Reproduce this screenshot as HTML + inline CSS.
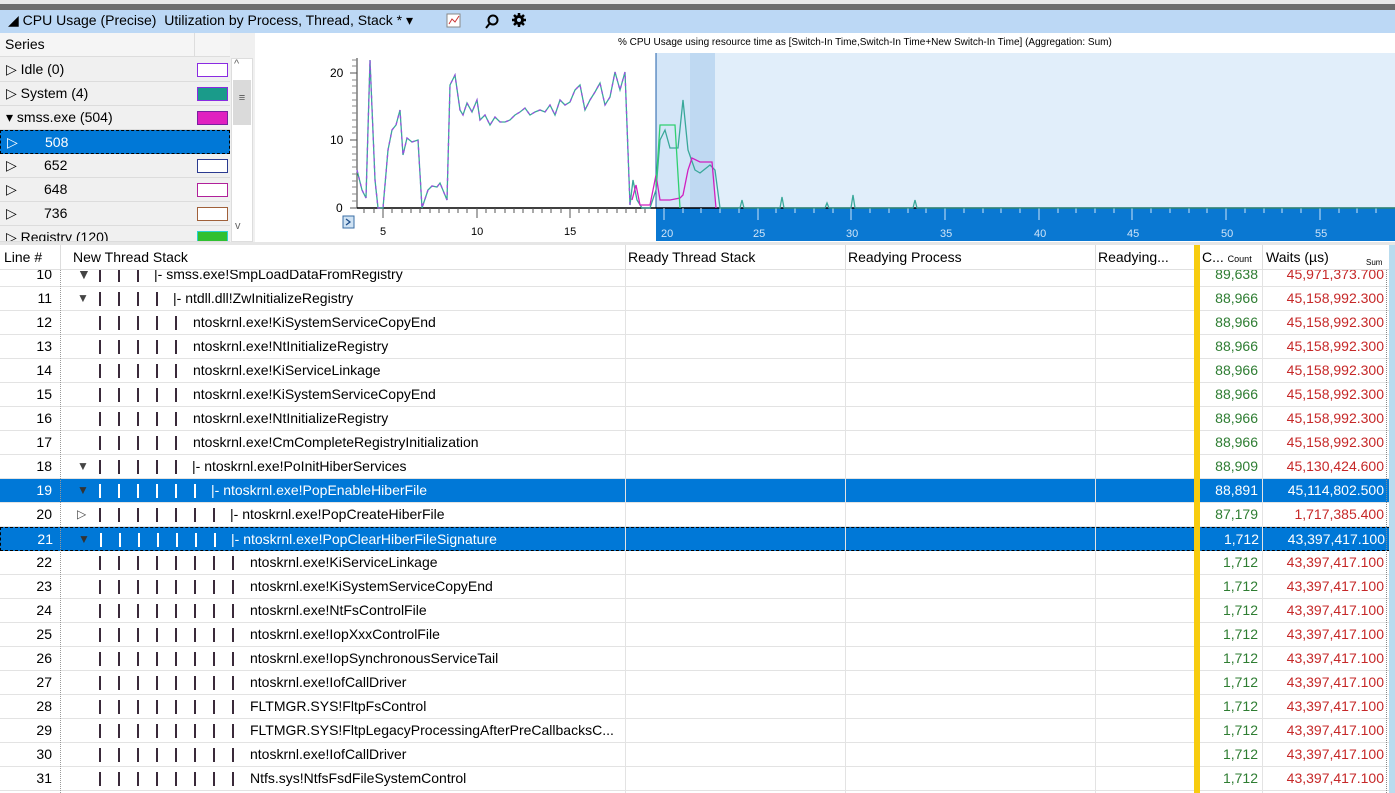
<!DOCTYPE html>
<html><head><meta charset="utf-8"><style>
*{margin:0;padding:0;box-sizing:border-box}
body{width:1395px;height:793px;overflow:hidden;background:#fff;font-family:"Liberation Sans",sans-serif;font-size:14px;color:#000;position:relative}
.a{position:absolute;white-space:nowrap}
.row{position:absolute;left:0;width:1395px;height:24px;border-bottom:1px solid #e3e3e3}
.sel{background:#0078d7;color:#fff}
.num{position:absolute;width:60px;text-align:right;padding-right:8px;left:0;top:3px}
.g{color:#2e7d32}.r{color:#c62828}
.sel .g,.sel .r{color:#fff}
.pp{position:absolute;top:3px}
.pi{position:absolute;top:5px;width:2px;height:14px;background:#3a2a3a}
.sel .pi{background:#fff}
.sr{position:absolute;left:0;width:230px;height:24px;border-bottom:1px solid #dcdcdc;background:#f0f0f0}
.sw{position:absolute;left:197px;top:5px;width:31px;height:14px;border:1.5px solid}
</style></head><body>
<div class="a" style="left:0;top:0;width:1395px;height:4px;background:#e8e8e8"></div>
<div class="a" style="left:0;top:4px;width:1395px;height:6px;background:#6d6d6d"></div>
<div class="a" style="left:0;top:10px;width:1395px;height:23px;background:#bcd8f5"></div>
<div class="a" style="left:8px;top:12px">◢ CPU Usage (Precise)&nbsp; Utilization by Process, Thread, Stack * ▾</div>
<svg class="a" style="left:446px;top:12px" width="90" height="20"><rect x="1" y="2" width="13" height="13" fill="#fff" stroke="#888"/><path d="M3 12l3-5 3 3 4-6" stroke="#c33" fill="none"/><circle cx="47" cy="8" r="4.5" stroke="#000" stroke-width="2" fill="none"/><path d="M44 11l-4 5" stroke="#000" stroke-width="2"/><path d="M73 1v14M66 8h14M68 3l10 10M78 3l-10 10" stroke="#000" stroke-width="2.5"/><circle cx="73" cy="8" r="5" fill="#000"/><circle cx="73" cy="8" r="2" fill="#bcd8f5"/></svg>

<div class="a" style="left:0;top:33px;width:255px;height:209px;background:#f0f0f0"></div>
<div class="a" style="left:0;top:33px;width:194px;height:24px;background:#f5f5f5;border-bottom:1px solid #ddd;padding:3px 5px">Series</div>
<div class="a" style="left:194px;top:33px;width:36px;height:24px;background:#f5f5f5;border-left:1px solid #ddd;border-bottom:1px solid #ddd"></div>
<div class="sr" style="top:58px"><span class="a" style="left:6px;top:3px">▷ Idle (0)</span><div class="sw" style="border-color:#8a2be2;background:#fff"></div></div>
<div class="sr" style="top:82px"><span class="a" style="left:6px;top:3px">▷ System (4)</span><div class="sw" style="border-color:#8a2be2;background:#1a9b8a"></div></div>
<div class="sr" style="top:106px"><span class="a" style="left:6px;top:3px">▾ smss.exe (504)</span><div class="sw" style="border-color:#7a1ea0;background:#e020c0"></div></div>
<div class="sr" style="top:130px;background:#0078d7;color:#fff;border:1px dashed #000"><span class="a" style="left:6px;top:3px">▷</span><span class="a" style="left:44px;top:3px">508</span></div>
<div class="sr" style="top:154px"><span class="a" style="left:6px;top:3px">▷</span><span class="a" style="left:44px;top:3px">652</span><div class="sw" style="border-color:#2a3a90;background:#fff"></div></div>
<div class="sr" style="top:178px"><span class="a" style="left:6px;top:3px">▷</span><span class="a" style="left:44px;top:3px">648</span><div class="sw" style="border-color:#b0209a;background:#fff"></div></div>
<div class="sr" style="top:202px"><span class="a" style="left:6px;top:3px">▷</span><span class="a" style="left:44px;top:3px">736</span><div class="sw" style="border-color:#a0603a;background:#fff"></div></div>
<div class="sr" style="top:226px;height:16px;overflow:hidden"><span class="a" style="left:6px;top:3px">▷ Registry (120)</span><div class="sw" style="border-color:#2ad0d0;background:#30c030"></div></div>
<div class="a" style="left:231px;top:58px;width:22px;height:184px;background:#fff;border:1px solid #ddd"></div>
<div class="a" style="left:234px;top:58px;font-size:11px;color:#666">^</div>
<div class="a" style="left:233px;top:80px;width:18px;height:45px;background:#dadada;color:#555;text-align:center;padding-top:12px;font-size:11px">≡</div>
<div class="a" style="left:235px;top:220px;font-size:11px;color:#666">v</div>

<div class="a" style="left:255px;top:33px;width:1140px;height:209px;background:#fff"></div>
<div class="a" style="left:618px;top:37px;font-size:10px">% CPU Usage using resource time as [Switch-In Time,Switch-In Time+New Switch-In Time] (Aggregation: Sum)</div>
<svg class="a" style="left:0;top:0" width="1395" height="245">
<rect x="656" y="53" width="739" height="155" fill="#e1eefa"/>
<rect x="656" y="53" width="34" height="155" fill="#d4e6f8"/>
<rect x="690" y="53" width="25" height="155" fill="#bfd9f2"/>
<line x1="656" y1="53" x2="656" y2="208" stroke="#1f5fa8"/>
<rect x="656" y="208" width="739" height="33" fill="#0a78d2"/>
<line x1="357" y1="58" x2="357" y2="208" stroke="#333"/>
<g stroke="#555"><line x1="350" y1="73" x2="357" y2="73"/><line x1="350" y1="140" x2="357" y2="140"/><line x1="350" y1="208" x2="357" y2="208"/></g>
<g stroke="#888">
<line x1="352" y1="80" x2="357" y2="80"/><line x1="352" y1="86" x2="357" y2="86"/><line x1="352" y1="93" x2="357" y2="93"/><line x1="352" y1="100" x2="357" y2="100"/><line x1="352" y1="106" x2="357" y2="106"/><line x1="352" y1="113" x2="357" y2="113"/><line x1="352" y1="120" x2="357" y2="120"/><line x1="352" y1="127" x2="357" y2="127"/><line x1="352" y1="133" x2="357" y2="133"/><line x1="352" y1="147" x2="357" y2="147"/><line x1="352" y1="154" x2="357" y2="154"/><line x1="352" y1="160" x2="357" y2="160"/><line x1="352" y1="167" x2="357" y2="167"/><line x1="352" y1="174" x2="357" y2="174"/><line x1="352" y1="181" x2="357" y2="181"/><line x1="352" y1="187" x2="357" y2="187"/><line x1="352" y1="194" x2="357" y2="194"/><line x1="352" y1="201" x2="357" y2="201"/><line x1="352" y1="66" x2="357" y2="66"/><line x1="352" y1="60" x2="357" y2="60"/>
</g>
<text x="330" y="77" font-size="12" font-family="Liberation Sans">20</text>
<text x="330" y="144" font-size="12" font-family="Liberation Sans">10</text>
<text x="336" y="212" font-size="12" font-family="Liberation Sans">0</text>
<line x1="357" y1="208" x2="1395" y2="208" stroke="#000" stroke-width="1.5"/>
<g stroke="#555" stroke-width="1">
<path d="M364 208v5M374 208v5M383 208v10M392 208v5M402 208v5M411 208v5M420 208v5M430 208v5M439 208v5M449 208v5M458 208v5M467 208v5M477 208v10M486 208v5M495 208v5M505 208v5M514 208v5M523 208v5M533 208v5M542 208v5M551 208v5M561 208v5M570 208v10M579 208v5M589 208v5M598 208v5M607 208v5M617 208v5M626 208v5M636 208v5M645 208v5"/>
</g>
<g stroke="#cfe4f8" stroke-width="1">
<path d="M664 208v12M683 208v5M701 208v5M720 208v5M739 208v5M758 208v12M776 208v5M795 208v5M814 208v5M833 208v5M851 208v12M870 208v5M889 208v5M908 208v5M926 208v5M945 208v12M964 208v5M983 208v5M1001 208v5M1020 208v5M1039 208v12M1058 208v5M1076 208v5M1095 208v5M1114 208v5M1132 208v12M1151 208v5M1170 208v5M1189 208v5M1207 208v5M1226 208v12M1245 208v5M1264 208v5M1282 208v5M1301 208v5M1320 208v12M1339 208v5M1357 208v5M1376 208v5"/>
</g>
<g font-size="11" font-family="Liberation Sans" fill="#000"><text x="380" y="235">5</text><text x="471" y="235">10</text><text x="564" y="235">15</text></g>
<g font-size="11" font-family="Liberation Sans" fill="#cfe4f8"><text x="661" y="237">20</text><text x="753" y="237">25</text><text x="846" y="237">30</text><text x="940" y="237">35</text><text x="1034" y="237">40</text><text x="1127" y="237">45</text><text x="1221" y="237">50</text><text x="1315" y="237">55</text></g>
<rect x="343" y="216" width="11" height="12" fill="#cfe2f3" stroke="#3a6ea5"/><path d="M346 219l4 3-4 3" stroke="#1f4f8a" fill="none" stroke-width="1.3"/>
<g fill="none" stroke-width="1.3">
<polyline stroke="#3aa89a" points="357,170 362,190 366,198 370,60 375,180 378,208 383,208 388,150 392,130 396,125 400,110 403,155 407,138 412,142 418,140 422,208 428,190 432,186 437,187 440,183 447,200 450,85 455,75 460,110 463,115 467,103 472,112 477,100 480,120 485,115 490,125 495,117 500,122 505,122 510,120 515,115 520,112 525,108 530,115 535,112 540,110 545,112 550,105 555,115 560,100 565,105 570,102 575,90 580,85 585,110 590,100 595,92 600,83 605,105 610,97 615,72 620,90 625,72 630,205 633,180 637,200 642,208 650,208 656,190 660,140 665,130 670,148 678,148 683,100 688,150 695,170 700,173 710,165 715,170 720,208 740,208 742,200 744,208 780,208 782,197 784,208 825,208 827,203 829,208 851,208 853,195 855,208 913,208 915,200 917,208 1395,208"/>
<polyline stroke="#9a50e0" stroke-dasharray="3,4" points="357,170 362,190 366,198 370,60 375,180 378,208 383,208 388,150 392,130 396,125 400,110 403,155 407,138 412,142 418,140 422,208 428,190 432,186 437,187 440,183 447,200 450,85 455,75 460,110 463,115 467,103 472,112 477,100 480,120 485,115 490,125 495,117 500,122 505,122 510,120 515,115 520,112 525,108 530,115 535,112 540,110 545,112 550,105 555,115 560,100 565,105 570,102 575,90 580,85 585,110 590,100 595,92 600,83 605,105 610,97 615,72 620,90 625,72 630,205"/>
<polyline stroke="#d020c0" points="632,200 636,185 640,205 650,205 656,175 660,200 670,200 680,198 683,195 688,170 692,158 700,162 712,162 716,208"/>
<polyline stroke="#30d070" points="656,185 660,125 675,125 680,208"/>
</g>
</svg>

<div class="a" style="left:0;top:242px;width:1395px;height:3px;background:#e6e6e6"></div>
<div class="a" style="left:0;top:245px;width:1395px;height:25px;background:#fff;border-bottom:1px solid #e0e0e0"></div>
<div class="a" style="left:4px;top:249px">Line #</div>
<div class="a" style="left:60px;top:245px;width:1px;height:25px;background:#ddd"></div>
<div class="a" style="left:73px;top:249px">New Thread Stack</div>
<div class="a" style="left:625px;top:245px;width:1px;height:25px;background:#ddd"></div>
<div class="a" style="left:628px;top:249px">Ready Thread Stack</div>
<div class="a" style="left:845px;top:245px;width:1px;height:25px;background:#ddd"></div>
<div class="a" style="left:848px;top:249px">Readying Process</div>
<div class="a" style="left:1095px;top:245px;width:1px;height:25px;background:#ddd"></div>
<div class="a" style="left:1098px;top:249px">Readying...</div>
<div class="a" style="left:1202px;top:249px">C... <span style="font-size:9px">Count</span></div>
<div class="a" style="left:1262px;top:245px;width:1px;height:25px;background:#ddd"></div>
<div class="a" style="left:1266px;top:249px">Waits (µs)</div>
<div class="a" style="left:1366px;top:258px;font-size:8px">Sum</div>

<div class="a" style="left:0;top:270px;width:1395px;height:17px;overflow:hidden">
<div class="row" style="top:-7px"><span class="num">10</span><span class="pp" style="left:77px;color:#444">▼</span><span class="pi" style="left:99px"></span><span class="pi" style="left:118px"></span><span class="pi" style="left:137px"></span><span class="pp" style="left:154px">|- smss.exe!SmpLoadDataFromRegistry</span><span class="pp g" style="left:1200px;width:58px;text-align:right">89,638</span><span class="pp r" style="left:1262px;width:122px;text-align:right">45,971,373.700</span></div>
</div>
<div id="rows"></div>
<script>
var R=[
[11,'▼',4,'|- ntdll.dll!ZwInitializeRegistry','88,966','45,158,992.300',0],
[12,'',5,'ntoskrnl.exe!KiSystemServiceCopyEnd','88,966','45,158,992.300',0],
[13,'',5,'ntoskrnl.exe!NtInitializeRegistry','88,966','45,158,992.300',0],
[14,'',5,'ntoskrnl.exe!KiServiceLinkage','88,966','45,158,992.300',0],
[15,'',5,'ntoskrnl.exe!KiSystemServiceCopyEnd','88,966','45,158,992.300',0],
[16,'',5,'ntoskrnl.exe!NtInitializeRegistry','88,966','45,158,992.300',0],
[17,'',5,'ntoskrnl.exe!CmCompleteRegistryInitialization','88,966','45,158,992.300',0],
[18,'▼',5,'|- ntoskrnl.exe!PoInitHiberServices','88,909','45,130,424.600',0],
[19,'▼',6,'|- ntoskrnl.exe!PopEnableHiberFile','88,891','45,114,802.500',1],
[20,'▷',7,'|- ntoskrnl.exe!PopCreateHiberFile','87,179','1,717,385.400',0],
[21,'▼',7,'|- ntoskrnl.exe!PopClearHiberFileSignature','1,712','43,397,417.100',2],
[22,'',8,'ntoskrnl.exe!KiServiceLinkage','1,712','43,397,417.100',0],
[23,'',8,'ntoskrnl.exe!KiSystemServiceCopyEnd','1,712','43,397,417.100',0],
[24,'',8,'ntoskrnl.exe!NtFsControlFile','1,712','43,397,417.100',0],
[25,'',8,'ntoskrnl.exe!IopXxxControlFile','1,712','43,397,417.100',0],
[26,'',8,'ntoskrnl.exe!IopSynchronousServiceTail','1,712','43,397,417.100',0],
[27,'',8,'ntoskrnl.exe!IofCallDriver','1,712','43,397,417.100',0],
[28,'',8,'FLTMGR.SYS!FltpFsControl','1,712','43,397,417.100',0],
[29,'',8,'FLTMGR.SYS!FltpLegacyProcessingAfterPreCallbacksC...','1,712','43,397,417.100',0],
[30,'',8,'ntoskrnl.exe!IofCallDriver','1,712','43,397,417.100',0],
[31,'',8,'Ntfs.sys!NtfsFsdFileSystemControl','1,712','43,397,417.100',0]];
var h='';
R.forEach(function(r){var t=287+(r[0]-11)*24;var c=r[6]?' sel':'';var b=r[6]==2?'border:1px dashed #000;':'';
h+='<div class="row'+c+'" style="top:'+t+'px;'+b+'"><span class="num">'+r[0]+'</span>';
if(r[1])h+='<span class="pp" style="left:77px;font-size:12px;top:4px;'+(r[6]?'color:#333':'color:#444')+'">'+r[1]+'</span>';
for(var i=0;i<r[2];i++)h+='<span class="pi" style="left:'+(99+19*i)+'px"></span>';
var tx=r[3].charAt(0)=='|'?(99+19*r[2]-2):(99+19*r[2]-1);
h+='<span class="pp" style="left:'+tx+'px">'+r[3]+'</span>';
h+='<span class="pp g" style="left:1200px;width:58px;text-align:right">'+r[4]+'</span><span class="pp r" style="left:1262px;width:122px;text-align:right">'+r[5]+'</span></div>';});
document.getElementById('rows').innerHTML=h;
</script>
<div class="a" style="left:60px;top:270px;width:0;height:523px;border-left:1px dotted #999"></div>
<div class="a" style="left:625px;top:270px;width:1px;height:523px;background:#e3e3e3"></div>
<div class="a" style="left:845px;top:270px;width:1px;height:523px;background:#e3e3e3"></div>
<div class="a" style="left:1095px;top:270px;width:1px;height:523px;background:#e3e3e3"></div>
<div class="a" style="left:1262px;top:270px;width:1px;height:523px;background:#e3e3e3"></div>
<div class="a" style="left:1386px;top:270px;width:0;height:523px;border-left:1px dotted #888"></div>
<div class="a" style="left:1194px;top:245px;width:6px;height:548px;background:#f7cc0f"></div>
<div class="a" style="left:1389px;top:245px;width:6px;height:548px;background:#b9dcef"></div>
</body></html>
